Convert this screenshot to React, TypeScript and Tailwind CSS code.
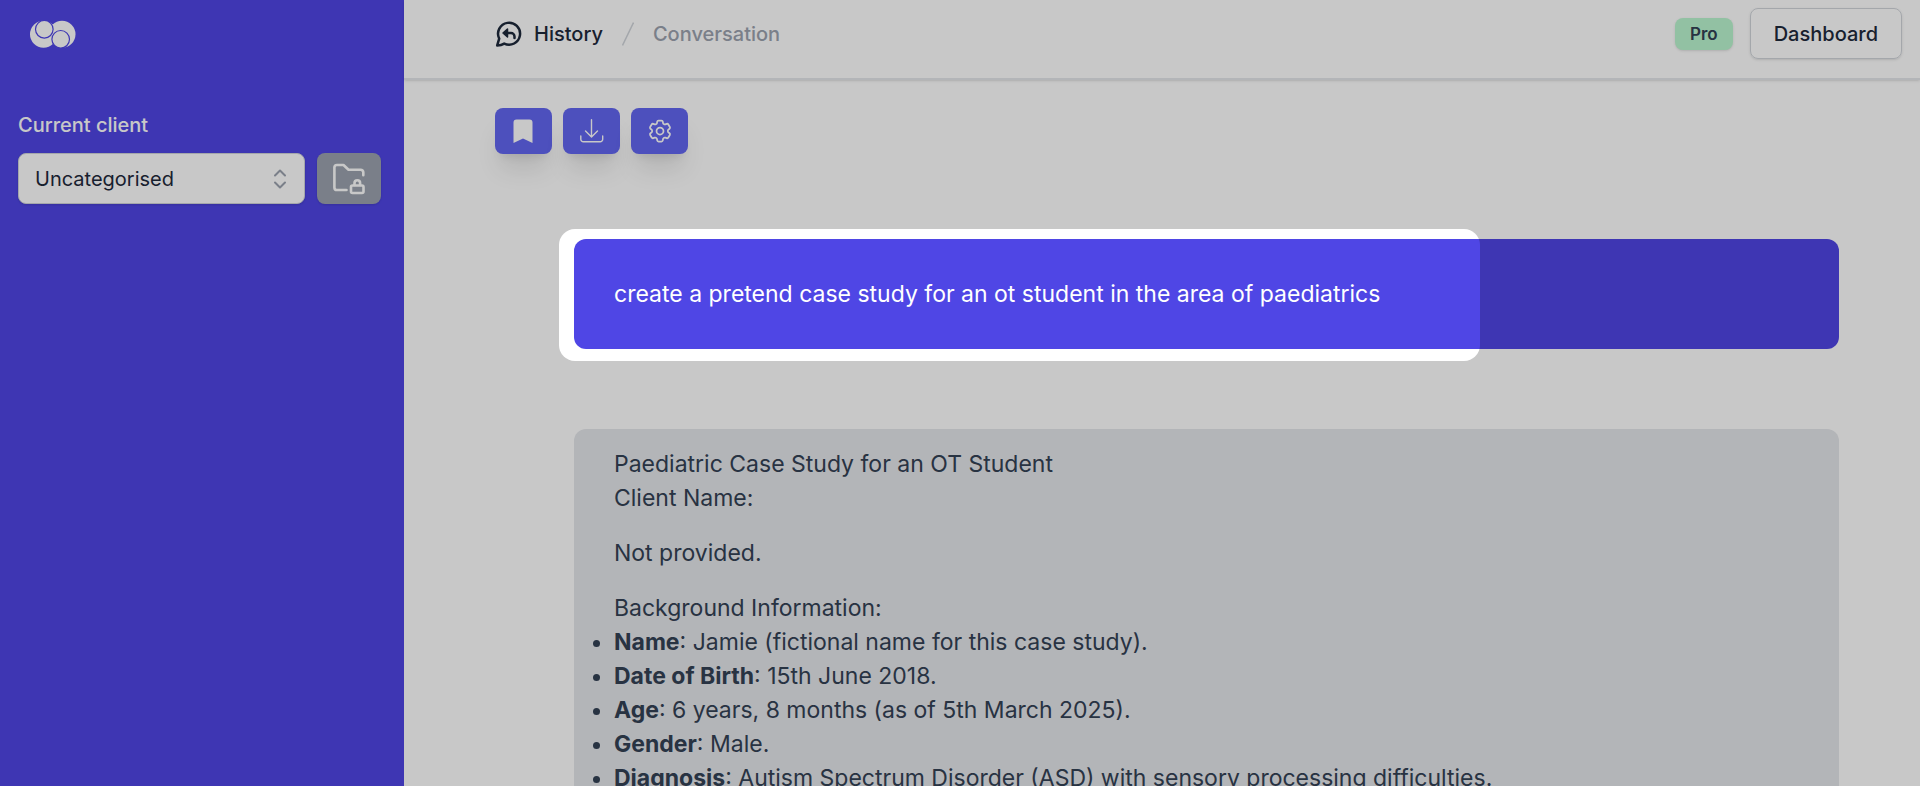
import { useState } from "react";
import { HiOutlineCog6Tooth } from "react-icons/hi2";

const caseDetails = [
  { label: "Name", value: "Jamie (fictional name for this case study)." },
  { label: "Date of Birth", value: "15th June 2018." },
  { label: "Age", value: "6 years, 8 months (as of 5th March 2025)." },
  { label: "Gender", value: "Male." },
  { label: "Diagnosis", value: "Autism Spectrum Disorder (ASD) with sensory processing difficulties." },
];

function Logo() {
  return (
    <svg className="h-7 w-[46px]" viewBox="0 0 46 28" fill="none">
      <circle cx="13.5" cy="14.3" r="13.5" fill="#fff" />
      <circle cx="32" cy="14.3" r="13.5" fill="#fff" />
      <circle cx="14.3" cy="9.3" r="8.8" fill="#fff" stroke="#4f46e5" strokeWidth="1.2" />
      <circle cx="30.7" cy="19.3" r="8.8" fill="#fff" stroke="#4f46e5" strokeWidth="1.2" />
    </svg>
  );
}

function HistoryIcon() {
  return (
    <svg className="size-7" viewBox="0 0 28 28" fill="none" stroke="currentColor" strokeWidth="2.5" strokeLinecap="round" strokeLinejoin="round">
      <path d="M2.2 25.4 4.2 18.6A11 11 0 1 1 9.2 23.6C7 25 4.500 25.400 2.200 25.400Z" />
      <path d="M19.500 18v-1.500a3.500 3.500 0 0 0-3.500-3.500H10" />
      <path d="m12.500 9-4.500 4 4.500 4z" fill="currentColor" strokeWidth="1.500" />
    </svg>
  );
}

function BookmarkIcon() {
  return (
    <svg className="size-6" viewBox="0 0 24 24" fill="currentColor">
      <path d="M4.500 0.500h13a3 3 0 0 1 3 3V24L11 19.500 1.500 24V3.500a3 3 0 0 1 3-3z" />
    </svg>
  );
}

function DownloadIcon() {
  return (
    <svg className="size-6" viewBox="0 0 24 24" fill="none" stroke="currentColor" strokeWidth="1.400" strokeLinecap="round" strokeLinejoin="round">
      <path d="M11.500 0.800v17M5.500 12l6 6 6-6M0.800 17v3.200a2.500 2.500 0 0 0 2.500 2.500h16.900a2.500 2.500 0 0 0 2.500-2.500V17" />
    </svg>
  );
}

function FolderLockIcon() {
  return (
    <svg className="size-8" viewBox="0 0 32 32" fill="none" stroke="currentColor" strokeWidth="2.600" strokeLinecap="round" strokeLinejoin="round">
      <path d="M13.500 27H4a2.600 2.600 0 0 1-2.600-2.600V4.600A2.600 2.600 0 0 1 4 2h6.500l5 4.700h12.200a2.600 2.600 0 0 1 2.600 2.600v3" />
      <rect x="18" y="22.500" width="12.500" height="7.500" rx="1.500" />
      <path d="M21.500 22v-2a2.800 2.800 0 0 1 5.600 0v2" />
    </svg>
  );
}

function Sidebar() {
  const [client, setClient] = useState("Uncategorised");

  return (
    <aside className="w-[404px] shrink-0 bg-[#4f46e5] pl-[18px] pr-[23px] pt-5">
      <a href="#" aria-label="Home" className="ml-3 block w-fit">
        <Logo />
      </a>
      <label htmlFor="client" className="mt-[63px] block text-[20px] leading-7 font-medium text-white">
        Current client
      </label>
      <div className="mt-[14px] flex gap-3">
        <div className="relative flex-1">
          <select
            id="client"
            value={client}
            onChange={(e) => setClient(e.target.value)}
            className="h-[51px] w-full appearance-none rounded-lg border border-[#d1d5db] bg-white px-4 text-[20px] text-[#1e293b] shadow-sm"
          >
            <option>Uncategorised</option>
          </select>
          <svg className="pointer-events-none absolute top-4 right-[18px] h-5 w-3.5 text-[#9ca3af]" viewBox="0 0 14 20" fill="none" stroke="currentColor" strokeWidth="2" strokeLinecap="round" strokeLinejoin="round">
            <path d="m2 6.500 5-5 5 5M2 13.500l5 5 5-5" />
          </svg>
        </div>
        <button aria-label="Manage clients" className="flex h-[51px] w-16 items-center justify-center rounded-lg bg-[#9ca3af] text-white shadow-sm">
          <FolderLockIcon />
        </button>
      </div>
    </aside>
  );
}

function Header() {
  return (
    <header className="flex items-center justify-between border-b-2 border-[#e5e7eb] pt-2 pr-[18px] pb-[19px] pl-[91px] shadow-sm">
      <nav className="flex items-center text-[20px] font-medium">
        <a href="#" className="flex items-center gap-[11px] text-[#1e293b]">
          <HistoryIcon />
          History
        </a>
        <svg className="mx-[19px] h-6 w-3 text-[#d1d5db]" viewBox="0 0 12 24" stroke="currentColor" strokeWidth="1.500">
          <path d="M0.500 23.500 11.500 0.500" />
        </svg>
        <a href="#" className="text-[#9ca3af]">
          Conversation
        </a>
      </nav>
      <div className="flex items-center gap-[17px]">
        <span className="rounded-lg bg-[#bbf7d0] px-[15px] text-[17px] leading-8 font-semibold text-[#334155] shadow-sm">Pro</span>
        <button className="h-[51px] rounded-lg border border-[#d1d5db] px-[23px] text-[20px] font-medium text-[#1e293b] shadow-sm">
          Dashboard
        </button>
      </div>
    </header>
  );
}

export default function App() {
  return (
    <div className="relative flex h-screen overflow-hidden bg-white font-['Inter',sans-serif]">
      <Sidebar />
      <div className="min-w-0 flex-1">
        <Header />
        <main className="pt-7 pr-[81px] pl-[91px]">
          <div className="flex gap-[11px]">
            <button aria-label="Bookmark" className="flex h-[46px] w-[57px] items-center justify-center rounded-lg bg-[#6366f1] text-white shadow-xl">
              <BookmarkIcon />
            </button>
            <button aria-label="Download" className="flex h-[46px] w-[57px] items-center justify-center rounded-lg bg-[#6366f1] text-white shadow-xl">
              <DownloadIcon />
            </button>
            <button aria-label="Settings" className="flex h-[46px] w-[57px] items-center justify-center rounded-lg bg-[#6366f1] text-white shadow-xl">
              <HiOutlineCog6Tooth className="size-7" />
            </button>
          </div>

          <div className="mt-[85px] ml-[79px] text-[23px] leading-[34px]">
            <div className="relative rounded-xl bg-[#4f46e5] px-10 py-[38px] text-white">
              <p>create a pretend case study for an ot student in the area of paediatrics</p>
              {/* Spotlight: dims everything outside of the box */}
              <div className="pointer-events-none absolute -top-2.5 -bottom-3 -left-[15px] z-50 w-[921px] rounded-2xl shadow-[0_0_0_2000px_rgba(0,0,0,0.215)]" />
            </div>

            <div className="mt-20 rounded-xl bg-[#e5e7eb] px-10 pt-[18px] pb-10 text-[#334155]">
              <p>Paediatric Case Study for an OT Student</p>
              <p>Client Name:</p>
              <p className="my-[21px]">Not provided.</p>
              <p>Background Information:</p>
              <ul className="list-disc">
                {caseDetails.map((item) => (
                  <li key={item.label}>
                    <strong className="font-bold">{item.label}</strong>: {item.value}
                  </li>
                ))}
              </ul>
            </div>
          </div>
        </main>
      </div>
    </div>
  );
}
